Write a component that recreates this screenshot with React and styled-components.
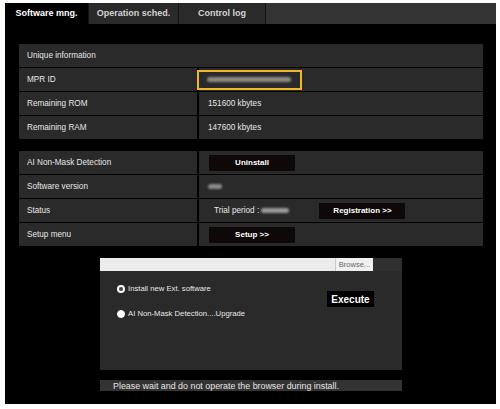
import React from 'react';
import styled, { createGlobalStyle } from 'styled-components';

const GlobalStyle = createGlobalStyle`
  html, body {
    margin: 0;
    padding: 0;
    background: #ffffff;
  }
  body {
    font-family: "Liberation Sans", Arial, sans-serif;
  }
`;

// whole black window
const Frame = styled.div`
  width: 491px;
  height: 401px;
  margin: 3px 0 0 5px;
  background: #000;
  display: flex;
  flex-direction: column;
  overflow: hidden;
`;

// tabs on top
const TabBar = styled.div`
  display: flex;
  height: 21px;
  background: #333333;
`;

const Tab = styled.div`
  width: ${p => p.w}px;
  display: flex;
  align-items: center;
  justify-content: center;
  font-size: 9px;
  font-weight: bold;
  color: ${p => (p.active ? '#ffffff' : '#d4d4d4')};
  background: ${p => (p.active ? '#000' : '#2a2a2a')};
  border-right: 1px solid #141414;
  padding-bottom: 1px;
  box-sizing: border-box;
`;

const Content = styled.div`
  padding: 20px 13px 0 14px;
  display: flex;
  flex-direction: column;
`;

// info tables
const Table = styled.div`
  display: grid;
  grid-template-columns: 178px 1fr;
  grid-auto-rows: 23px;
  gap: 1px 2px;
  background: #000;
  margin-bottom: 12px;
`;

const Cell = styled.div`
  background: #2a2a2a;
  color: #e6e6e6;
  font-size: 8.2px;
  display: flex;
  align-items: center;
  padding-left: ${p => p.pl ?? 8}px;
  grid-column: ${p => (p.full ? '1 / span 2' : 'auto')};
`;

const Blur = styled.span`
  display: inline-block;
  width: ${p => p.w}px;
  height: 5px;
  border-radius: 3px;
  background: ${p => p.c || '#8a8a8a'};
  filter: blur(1.3px);
`;

const Highlight = styled.div`
  width: 105px;
  height: 20px;
  margin-left: -11px;
  box-sizing: border-box;
  border: 2px solid #f2b530;
  display: flex;
  align-items: center;
  padding-left: 8px;
`;

const Button = styled.div`
  width: 86px;
  height: 16px;
  background: #0e0808;
  color: #fff;
  font-size: 8px;
  font-weight: bold;
  display: flex;
  align-items: center;
  justify-content: center;
  margin-left: ${p => p.ml ?? 0}px;
`;

// install area
const Install = styled.div`
  margin-left: 81px;
  width: 302px;
  display: flex;
  flex-direction: column;
`;

const FileRow = styled.div`
  display: flex;
  height: 13px;
  background: #303030;
`;

const FileInput = styled.div`
  width: 235px;
  background: #ececec;
`;

const Browse = styled.div`
  width: 38px;
  background: #f0f0f0;
  border-left: 1px solid #c8c8c8;
  box-sizing: border-box;
  color: #666;
  font-size: 7.5px;
  display: flex;
  align-items: center;
  justify-content: center;
`;

const Panel = styled.div`
  height: 99px;
  background: #2a2a2a;
  display: flex;
  justify-content: space-between;
  align-items: flex-start;
`;

const Options = styled.div`
  display: flex;
  flex-direction: column;
  gap: 16px;
  padding: 13px 0 0 17px;
`;

const Option = styled.div`
  display: flex;
  align-items: center;
  gap: 3px;
  color: #e8e8e8;
  font-size: 7.7px;
`;

const Radio = styled.span`
  width: 8px;
  height: 8px;
  border-radius: 50%;
  box-sizing: border-box;
  background: ${p => (p.checked ? '#444' : '#fff')};
  border: ${p => (p.checked ? '2px solid #fff' : '1px solid #fff')};
`;

const Execute = styled.div`
  width: 47px;
  height: 16px;
  margin: 20px 28px 0 0;
  background: #000;
  color: #fff;
  font-size: 10px;
  font-weight: bold;
  display: flex;
  align-items: center;
  justify-content: center;
`;

const Message = styled.div`
  margin-top: 10px;
  height: 11px;
  background: #333;
  color: #e4e4e4;
  font-size: 8.9px;
  display: flex;
  align-items: center;
  padding-left: 13px;
`;

const App = () => {
  return (
    <>
      <GlobalStyle />
      <Frame>
        <TabBar>
          <Tab w={84} active>Software mng.</Tab>
          <Tab w={90}>Operation sched.</Tab>
          <Tab w={87}>Control log</Tab>
        </TabBar>
        <Content>
          <Table>
            <Cell full>Unique information</Cell>
            <Cell>MPR ID</Cell>
            <Cell pl={9}>
              <Highlight><Blur w={84} /></Highlight>
            </Cell>
            <Cell>Remaining ROM</Cell>
            <Cell pl={9}>151600 kbytes</Cell>
            <Cell>Remaining RAM</Cell>
            <Cell pl={9}>147600 kbytes</Cell>
          </Table>
          <Table>
            <Cell>AI Non-Mask Detection</Cell>
            <Cell pl={10}><Button>Uninstall</Button></Cell>
            <Cell>Software version</Cell>
            <Cell pl={9}><Blur w={14} /></Cell>
            <Cell>Status</Cell>
            <Cell pl={15}>
              Trial period :&nbsp;
              <Blur w={28} c="#999" />
              <Button ml={30}>Registration &gt;&gt;</Button>
            </Cell>
            <Cell>Setup menu</Cell>
            <Cell pl={10}><Button>Setup &gt;&gt;</Button></Cell>
          </Table>
          <Install>
            <FileRow>
              <FileInput />
              <Browse>Browse...</Browse>
            </FileRow>
            <Panel>
              <Options>
                <Option><Radio checked />Install new Ext. software</Option>
                <Option><Radio />AI Non-Mask Detection....Upgrade</Option>
              </Options>
              <Execute>Execute</Execute>
            </Panel>
            <Message>Please wait and do not operate the browser during install.</Message>
          </Install>
        </Content>
      </Frame>
    </>
  );
};

export default App;
